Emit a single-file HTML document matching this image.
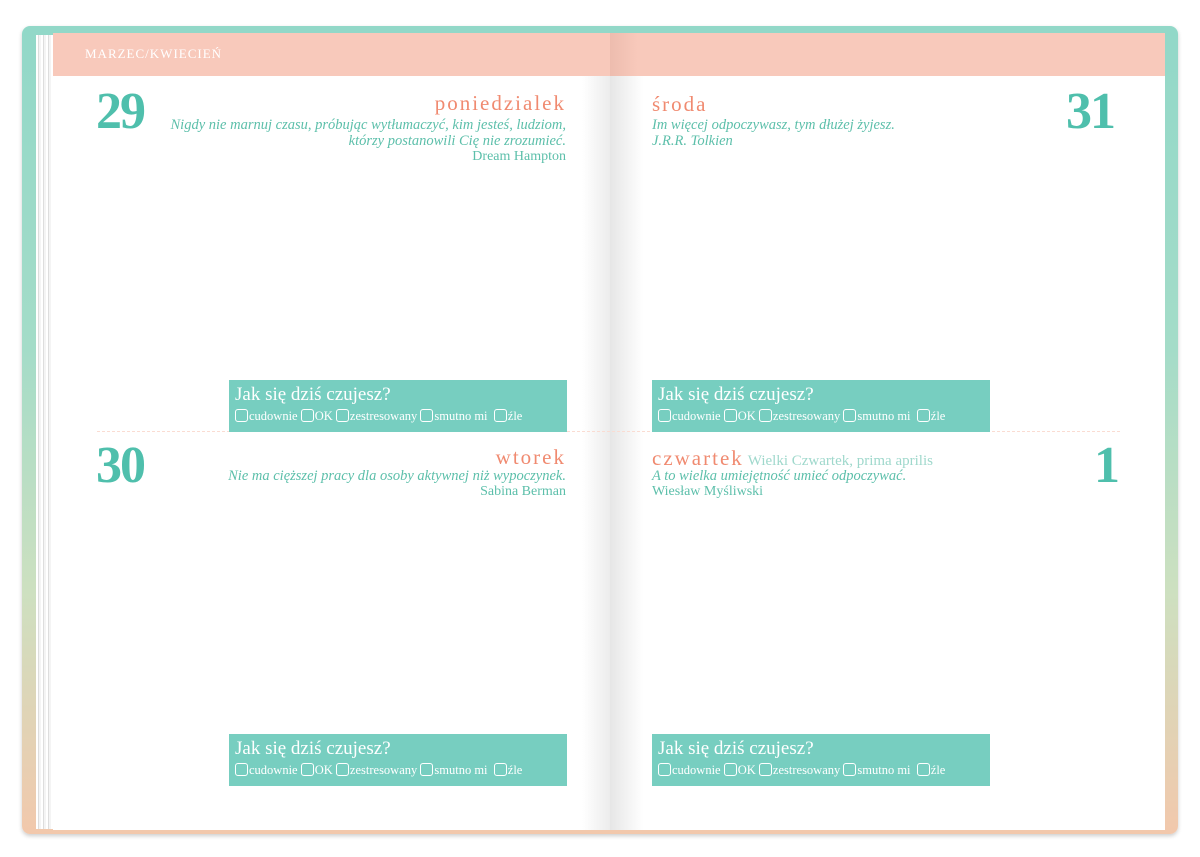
<!DOCTYPE html>
<html><head><meta charset="utf-8"><style>
*{margin:0;padding:0;box-sizing:border-box}
body{width:1200px;height:857px;background:#fff;position:relative;overflow:hidden;font-family:"Liberation Serif",serif}
.abs{position:absolute}
.cover{left:22px;top:26px;width:1156px;height:808px;border-radius:8px;background:linear-gradient(#92d8c8 0%,#a4dcc8 40%,#cde0c0 70%,#f2c8ac 100%);box-shadow:0 2px 4px rgba(0,0,0,.2)}
.page{top:33px;height:797px;background:#fff}
.hdr{top:33px;height:43px;background:#f8c9bb}
.num{color:#4fbfac;font-weight:bold;font-size:52px;font-family:"Liberation Serif",serif;letter-spacing:-2px;line-height:1}
.day{color:#f08a70;font-size:21px;letter-spacing:2px}
.q{color:#5cbfaa;font-style:italic;font-size:14.5px;line-height:16px;white-space:nowrap}
.a{color:#5cbfaa;font-size:14px;line-height:16px}
.box{background:#77cec0;width:338px;height:52px;color:#fff}
.box .t{position:absolute;left:6px;top:4px;font-size:19px}
.box .r{position:absolute;left:6px;top:29px;font-size:12.5px;white-space:nowrap}
.cb{display:inline-block;width:13px;height:13px;border:1px solid #fff;border-radius:3px;vertical-align:-2px;margin-right:1px}
.dash{top:431px;border-top:1px dashed #fadcd2;height:0}
</style></head><body>
<div class="abs cover"></div>
<div class="abs" style="left:36px;top:35px;width:20px;height:794px;background:repeating-linear-gradient(90deg,#fff 0 2px,#ddd 2px 3px,#f4f4f4 3px 5px)"></div>
<div class="abs page" style="left:53px;width:557px;background:linear-gradient(90deg,#fff 95%,#ececec 100%)"></div>
<div class="abs page" style="left:610px;width:555px;background:linear-gradient(90deg,#e6e6e6 0,#fff 6%)"></div>
<div class="abs hdr" style="left:53px;width:557px"></div>
<div class="abs hdr" style="left:610px;width:555px;background:linear-gradient(90deg,#edbcae 0,#f8c9bb 5%)"></div>
<div class="abs" style="left:85px;top:46px;color:#fff;font-size:13px;letter-spacing:1px">MARZEC/KWIECIEŃ</div>

<div class="abs dash" style="left:97px;width:1023px"></div>

<div class="abs num" style="left:96px;top:86px">29</div>
<div class="abs day" style="right:634px;top:91px">poniedzialek</div>
<div class="abs q" style="right:634px;top:117px;text-align:right">Nigdy nie marnuj czasu, próbując wytłumaczyć, kim jesteś, ludziom,<br>którzy postanowili Cię nie zrozumieć.</div>
<div class="abs a" style="right:634px;top:149px">Dream Hampton</div>

<div class="abs num" style="left:1066px;top:86px">31</div>
<div class="abs day" style="left:652px;top:92px">środa</div>
<div class="abs q" style="left:652px;top:117px">Im więcej odpoczywasz, tym dłużej żyjesz.</div>
<div class="abs q" style="left:652px;top:133px">J.R.R. Tolkien</div>

<div class="abs num" style="left:96px;top:440px">30</div>
<div class="abs day" style="right:634px;top:445px">wtorek</div>
<div class="abs q" style="right:634px;top:468px">Nie ma cięższej pracy dla osoby aktywnej niż wypoczynek.</div>
<div class="abs a" style="right:634px;top:484px">Sabina Berman</div>

<div class="abs num" style="left:1094px;top:440px">1</div>
<div class="abs" style="left:652px;top:446px"><span class="day">czwartek</span> <span style="color:#9fd8cc;font-size:15px">Wielki Czwartek, prima aprilis</span></div>
<div class="abs q" style="left:652px;top:468px">A to wielka umiejętność umieć odpoczywać.</div>
<div class="abs a" style="left:652px;top:484px">Wiesław Myśliwski</div>

<div class="abs box" style="left:229px;top:380px"><div class="t">Jak się dziś czujesz?</div><div class="r"><span class="cb"></span>cudownie <span class="cb"></span>OK <span class="cb"></span>zestresowany <span class="cb"></span>smutno mi &nbsp;<span class="cb"></span>źle</div></div>
<div class="abs box" style="left:652px;top:380px"><div class="t">Jak się dziś czujesz?</div><div class="r"><span class="cb"></span>cudownie <span class="cb"></span>OK <span class="cb"></span>zestresowany <span class="cb"></span>smutno mi &nbsp;<span class="cb"></span>źle</div></div>
<div class="abs box" style="left:229px;top:734px"><div class="t">Jak się dziś czujesz?</div><div class="r"><span class="cb"></span>cudownie <span class="cb"></span>OK <span class="cb"></span>zestresowany <span class="cb"></span>smutno mi &nbsp;<span class="cb"></span>źle</div></div>
<div class="abs box" style="left:652px;top:734px"><div class="t">Jak się dziś czujesz?</div><div class="r"><span class="cb"></span>cudownie <span class="cb"></span>OK <span class="cb"></span>zestresowany <span class="cb"></span>smutno mi &nbsp;<span class="cb"></span>źle</div></div>
</body></html>
